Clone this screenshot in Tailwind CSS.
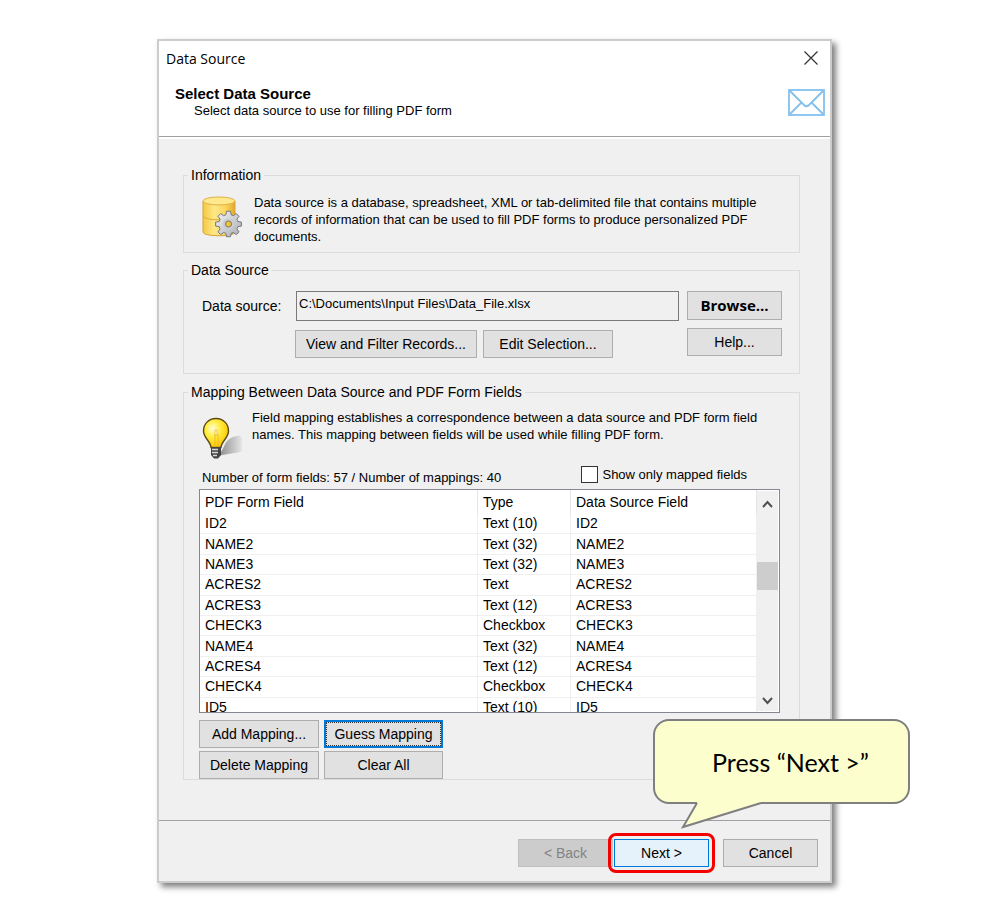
<!DOCTYPE html>
<html lang="en">

<head>
  <meta charset="UTF-8" />
  <meta name="viewport" content="width=device-width, initial-scale=1.0" />
  <script src="https://cdn.jsdelivr.net/npm/@tailwindcss/browser@4"></script>
  <title>Data Source</title>
</head>

<body class="bg-white text-black text-[14px] leading-[17px] font-['Liberation_Sans',Arial,sans-serif]">
  <main class="pt-[39px] pb-10 pl-[157px] pr-[170px]">
    <div class="relative border-2 border-[#cccccc] bg-[#f0f0f0] shadow-[4px_4px_6px_rgba(0,0,0,0.5)]">

      <!-- title and heading -->
      <header class="bg-white border-b border-[#a0a0a0] h-24 pl-[7px] pr-[5px]">
        <div class="flex justify-between items-center h-[34px]">
          <span class="font-['Open_Sans',sans-serif]">Data Source</span>
          <button class="w-[28px] flex justify-center" aria-label="Close">
            <svg width="14" height="14" viewBox="0 0 14 14" stroke="#333" stroke-width="1.2"><path d="M.5 .5l13 13M13.5 .5l-13 13" /></svg>
          </button>
        </div>
        <div class="flex justify-between pt-[10px] pl-[9px]">
          <div>
            <h1 class="font-bold text-[15px]">Select Data Source</h1>
            <p class="pl-[19px] text-[13px]">Select data source to use for filling PDF form</p>
          </div>
          <svg class="mt-1" width="37" height="27" viewBox="0 0 37 27" fill="none" stroke="#84c0ee" stroke-width="1.8">
            <rect x="1" y="1" width="35" height="25" />
            <path d="M1.500 1.500L16 16Q18.500 18.500 21 16L35.500 1.500M1.500 25.500L13.500 13.500M35.500 25.500L23.500 13.500" />
          </svg>
        </div>
      </header>

      <div class="border-t-2 border-white pt-[28px] pl-[24px] pr-[30px] pb-[40px]">
        <fieldset class="border border-[#dcdcdc] pt-[10px] pb-[7px] px-[18px]">
          <legend class="-ml-[14px] px-[3px]">Information</legend>
          <div class="flex">
            <svg class="shrink-0 mt-[2px] mr-[12px]" width="40" height="42" viewBox="0 0 40 42">
              <defs>
                <linearGradient id="gold" x1="0" x2="1">
                  <stop offset="0" stop-color="#f5c842" />
                  <stop offset=".35" stop-color="#ffe787" />
                  <stop offset=".7" stop-color="#fbd65c" />
                  <stop offset="1" stop-color="#e3a92c" />
                </linearGradient>
                <linearGradient id="steel" x1="0" y1="0" x2="1" y2="1">
                  <stop offset="0" stop-color="#f4f5f7" />
                  <stop offset="1" stop-color="#a9acb2" />
                </linearGradient>
              </defs>
              <path d="M1 5V36C1 41 33 41 33 36V5Z" fill="url(#gold)" stroke="#d8a336" />
              <ellipse cx="17" cy="5" rx="16" ry="4" fill="#ffe98c" stroke="#e0b048" />
              <path d="M1 20C4 24 14 24 18 23.500" fill="none" stroke="#dca93a" />
              <g fill="url(#steel)" stroke="#74777d" stroke-width="1">
                <path d="M24.500 15.200h4l.6 3.600 2.200.9 3-2.100 2.700 2.700-2.100 3 .9 2.200 3.600.6v4l-3.600.6-.9 2.200 2.100 3-2.700 2.700-3-2.100-2.200.9-.6 3.300h-4l-.6-3.300-2.200-.9-3 2.100-2.700-2.700 2.100-3-.9-2.200-3.600-.6v-4l3.600-.6.9-2.200-2.100-3 2.700-2.700 3 2.100 2.200-.9Z" />
              </g>
              <circle cx="26.500" cy="28" r="5.500" fill="#c9ccd1" />
              <circle cx="26.500" cy="28" r="3" fill="#f3c33f" stroke="#7d7760" />
            </svg>
            <p class="text-[13px]">Data source is a database, spreadsheet, XML or tab-delimited file that contains multiple records of information that can be used to fill PDF forms to produce personalized PDF documents.</p>
          </div>
        </fieldset>

        <fieldset class="mt-[9px] border border-[#dcdcdc] pt-[12px] pb-[15px] pl-[18px] pr-[17px]">
          <legend class="-ml-[14px] px-[3px]">Data Source</legend>
          <div class="flex gap-2">
            <div class="grow">
              <div class="flex items-center">
                <label for="file" class="w-[94px] shrink-0">Data source:</label>
                <input id="file" type="text" readonly value="C:\Documents\Input Files\Data_File.xlsx"
                  class="grow h-[30px] border border-[#7a7a7a] pl-[2px] pb-[6px] text-[13px]" />
              </div>
              <div class="flex gap-[6px] pl-[93px] mt-[9px]">
                <button class="w-[182px] h-[28px] border border-[#adadad] bg-[#e1e1e1]">View and Filter Records...</button>
                <button class="w-[130px] h-[28px] border border-[#adadad] bg-[#e1e1e1]">Edit Selection...</button>
              </div>
            </div>
            <div class="flex flex-col gap-2 w-[95px]">
              <button class="h-[29px] border border-[#adadad] bg-[#e1e1e1] text-[15px] font-bold font-['Open_Sans',sans-serif]">Browse...</button>
              <button class="h-[28px] border border-[#adadad] bg-[#e1e1e1]">Help...</button>
            </div>
          </div>
        </fieldset>

        <fieldset class="mt-[10px] border border-[#dcdcdc] pt-[8px] pl-[15px] pr-[19px]">
          <legend class="-ml-[11px] px-[3px]">Mapping Between Data Source and PDF Form Fields</legend>
          <div class="flex pl-[3px]">
            <svg class="shrink-0 mt-[8px] mr-[9px]" width="41" height="42" viewBox="0 0 41 42">
              <defs>
                <radialGradient id="glow" cx=".38" cy=".35" r=".65">
                  <stop offset="0" stop-color="#fffde0" />
                  <stop offset=".4" stop-color="#fff04a" />
                  <stop offset="1" stop-color="#fcc800" />
                </radialGradient>
                <linearGradient id="shade" x1="0" x2="1">
                  <stop offset="0" stop-color="#8c8c8c" />
                  <stop offset="1" stop-color="#e6e6e6" />
                </linearGradient>
              </defs>
              <path d="M17 36C22 34 22 24 29 21C34 18 41 17 40 24V34C34 37 26 36 17 39Z" fill="url(#shade)" />
              <path d="M14 1.500C6.500 1.500 1.500 7 1.500 14C1.500 21 8.500 24 9 30.500H19C19.500 24 26.500 21 26.500 14C26.500 7 21.500 1.500 14 1.500Z" fill="url(#glow)" stroke="#5c4a14" stroke-width="1.400" />
              <path d="M13 17v13M16 17v13" fill="none" stroke="#efb52a" />
              <rect x="13" y="13" width="2" height="5" fill="#fffbe6" stroke="#e8a51c" stroke-width=".6" />
              <path d="M9 30h10v8l-3 3.500h-4L9 38Z" fill="#444" />
              <path d="M10 32.500h6M10 35.500h6M11 38.500h4" stroke="#d8d8d8" stroke-width="1.300" />
            </svg>
            <p class="text-[13px]">Field mapping establishes a correspondence between a data source and PDF form field names. This mapping between fields will be used while filling PDF form.</p>
          </div>
          <div class="flex justify-between items-start pl-[3px] pr-[33px] mt-[7px] mb-[3px] text-[13px]">
            <p class="pt-[3px]">Number of form fields: 57 / Number of mappings: 40</p>
            <label class="flex items-center gap-1">
              <input type="checkbox" class="appearance-none size-[17px] border border-[#333] bg-white" />Show only mapped fields
            </label>
          </div>

          <div class="flex h-[224px] border border-[#828790] bg-white overflow-hidden">
            <table class="grow h-[228px] table-fixed border-separate border-spacing-0 text-left [&_th]:font-normal [&_th]:h-[24px] [&_th]:p-0 [&_th]:pl-[5px] [&_th]:pt-px [&_th]:border-r [&_th]:border-[#e5e5e5] [&_td]:p-0 [&_td]:pl-[5px] [&_td]:border-r [&_td]:border-b [&_td]:border-[#f0f0f0]">
              <thead>
                <tr>
                  <th>PDF Form Field</th>
                  <th class="w-[93px]">Type</th>
                  <th class="w-[186px]">Data Source Field</th>
                </tr>
              </thead>
              <tbody>
                <tr><td>ID2</td><td>Text (10)</td><td>ID2</td></tr>
                <tr><td>NAME2</td><td>Text (32)</td><td>NAME2</td></tr>
                <tr><td>NAME3</td><td>Text (32)</td><td>NAME3</td></tr>
                <tr><td>ACRES2</td><td>Text</td><td>ACRES2</td></tr>
                <tr><td>ACRES3</td><td>Text (12)</td><td>ACRES3</td></tr>
                <tr><td>CHECK3</td><td>Checkbox</td><td>CHECK3</td></tr>
                <tr><td>NAME4</td><td>Text (32)</td><td>NAME4</td></tr>
                <tr><td>ACRES4</td><td>Text (12)</td><td>ACRES4</td></tr>
                <tr><td>CHECK4</td><td>Checkbox</td><td>CHECK4</td></tr>
                <tr><td>ID5</td><td>Text (10)</td><td>ID5</td></tr>
              </tbody>
            </table>
            <!-- scroll bar -->
            <div class="flex flex-col items-center w-[21px] mr-px my-px pt-[9px] pb-[6px] bg-[#f0f0f0]">
              <svg width="11" height="8" viewBox="0 0 11 8" fill="none" stroke="#505050" stroke-width="2"><path d="M1 7L5.500 2L10 7" /></svg>
              <div class="w-full h-[28px] mt-[54px] mb-auto bg-[#cdcdcd]"></div>
              <svg width="11" height="8" viewBox="0 0 11 8" fill="none" stroke="#505050" stroke-width="2"><path d="M1 1L5.500 6L10 1" /></svg>
            </div>
          </div>

          <div class="grid grid-cols-[120px_119px] gap-x-[5px] gap-y-[3px] mt-[7px]">
            <button class="h-[28px] border border-[#adadad] bg-[#e1e1e1]">Add Mapping...</button>
            <button class="h-[28px] border-2 border-[#0078d7] bg-[#e1e1e1] outline-1 outline-dotted outline-[#333] -outline-offset-3">Guess Mapping</button>
            <button class="h-[28px] border border-[#adadad] bg-[#e1e1e1]">Delete Mapping</button>
            <button class="h-[28px] border border-[#adadad] bg-[#e1e1e1]">Clear All</button>
          </div>
        </fieldset>
      </div>

      <footer class="flex justify-end border-t border-[#a0a0a0] pt-[18px] pb-[14px] pr-[12px]">
        <button disabled class="w-[95px] h-[28px] border border-[#bfbfbf] bg-[#cccccc] text-[#838383]">&lt; Back</button>
        <div class="relative ml-px mr-[14px]">
          <button class="w-[95px] h-[28px] border border-[#0078d7] bg-[#e5f1fb]">Next &gt;</button>
          <div class="absolute -inset-[6px] border-3 border-[#f50000] rounded-lg pointer-events-none"></div>
        </div>
        <button class="w-[95px] h-[28px] border border-[#adadad] bg-[#e1e1e1]">Cancel</button>
      </footer>

      <!-- callout -->
      <div class="absolute -right-[80px] bottom-[77px] w-[257px] h-[85px] flex items-center justify-center pl-[18px] border-2 border-[#7f7f7f] rounded-2xl bg-[#fcfecd]">
        <p class="text-[25px] leading-[30px] font-['Lato',sans-serif]">Press “Next &gt;”</p>
        <svg class="absolute left-[26px] top-[80px]" width="84" height="28" viewBox="0 0 84 28">
          <path d="M16 0V2L2 26L80 2V0Z" fill="#fcfecd" />
          <path d="M16 2L2 26L80 2" fill="none" stroke="#7f7f7f" stroke-width="2" />
        </svg>
      </div>
    </div>
  </main>
</body>

</html>
